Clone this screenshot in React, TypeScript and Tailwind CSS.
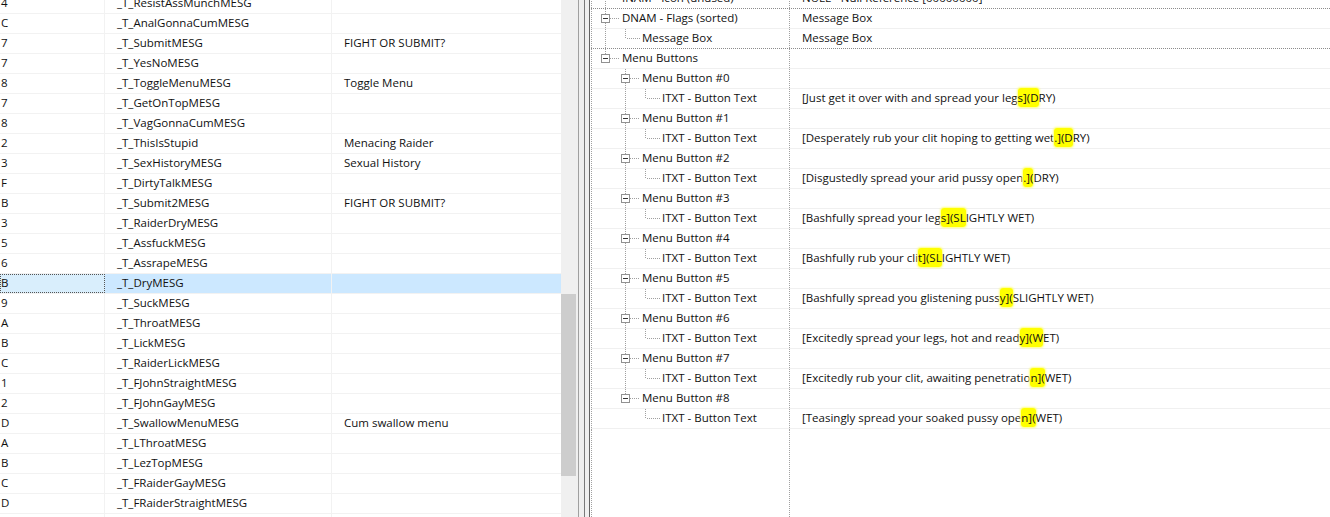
import { Fragment } from "react"

type ListRow = { id: string; edid: string; name?: string }

const listRows: ListRow[] = [
  { id: "4", edid: "_T_ResistAssMunchMESG" },
  { id: "C", edid: "_T_AnalGonnaCumMESG" },
  { id: "7", edid: "_T_SubmitMESG", name: "FIGHT OR SUBMIT?" },
  { id: "7", edid: "_T_YesNoMESG" },
  { id: "8", edid: "_T_ToggleMenuMESG", name: "Toggle Menu" },
  { id: "7", edid: "_T_GetOnTopMESG" },
  { id: "8", edid: "_T_VagGonnaCumMESG" },
  { id: "2", edid: "_T_ThisIsStupid", name: "Menacing Raider" },
  { id: "3", edid: "_T_SexHistoryMESG", name: "Sexual History" },
  { id: "F", edid: "_T_DirtyTalkMESG" },
  { id: "B", edid: "_T_Submit2MESG", name: "FIGHT OR SUBMIT?" },
  { id: "3", edid: "_T_RaiderDryMESG" },
  { id: "5", edid: "_T_AssfuckMESG" },
  { id: "6", edid: "_T_AssrapeMESG" },
  { id: "B", edid: "_T_DryMESG" },
  { id: "9", edid: "_T_SuckMESG" },
  { id: "A", edid: "_T_ThroatMESG" },
  { id: "B", edid: "_T_LickMESG" },
  { id: "C", edid: "_T_RaiderLickMESG" },
  { id: "1", edid: "_T_FJohnStraightMESG" },
  { id: "2", edid: "_T_FJohnGayMESG" },
  { id: "D", edid: "_T_SwallowMenuMESG", name: "Cum swallow menu" },
  { id: "A", edid: "_T_LThroatMESG" },
  { id: "B", edid: "_T_LezTopMESG" },
  { id: "C", edid: "_T_FRaiderGayMESG" },
  { id: "D", edid: "_T_FRaiderStraightMESG" },
  { id: "", edid: "" },
]

const SELECTED = 14

type TreeRow = {
  label: string
  value?: string | [string, string, string]
  level: number
  box?: boolean
  last?: boolean
  lines: number[]
  dotted?: boolean
}

const buttons: [string, string, string][] = [
  ["[Just get it over with and spread your leg", "s](D", "RY)"],
  ["[Desperately rub your clit hoping to getting wet", ".](D", "RY)"],
  ["[Disgustedly spread your arid pussy open", ".](", "DRY)"],
  ["[Bashfully spread your leg", "s](SL", "IGHTLY WET)"],
  ["[Bashfully rub your cli", "t](SL", "IGHTLY WET)"],
  ["[Bashfully spread you glistening puss", "y](", "SLIGHTLY WET)"],
  ["[Excitedly spread your legs, hot and read", "y](W", "ET)"],
  ["[Excitedly rub your clit, awaiting penetratio", "n](", "WET)"],
  ["[Teasingly spread your soaked pussy ope", "n](", "WET)"],
]

const treeRows: TreeRow[] = [
  { label: "INAM - Icon (unused)", value: "NULL - Null Reference [00000000]", level: 0, lines: [], dotted: true },
  { label: "DNAM - Flags (sorted)", value: "Message Box", level: 0, box: true, lines: [] },
  { label: "Message Box", value: "Message Box", level: 1, last: true, lines: [0], dotted: true },
  { label: "Menu Buttons", level: 0, box: true, last: true, lines: [] },
  ...buttons.flatMap((b, i): TreeRow[] => [
    { label: `Menu Button #${i}`, level: 1, box: true, last: i === buttons.length - 1, lines: [] },
    { label: "ITXT - Button Text", value: b, level: 2, last: true, lines: i === buttons.length - 1 ? [] : [1] },
  ]),
]

const LINE = "#a0a0a0"

function TreeLines({ row }: { row: TreeRow }) {
  const w = 30 + row.level * 20
  const cx = 13 + row.level * 20
  const mid = 9
  return (
    <svg width={w} height={19} className="shrink-0" shapeRendering="crispEdges">
      {row.lines.map((l) => (
        <line key={l} x1={13 + l * 20 + 0.5} y1={0} x2={13 + l * 20 + 0.5} y2={19} stroke={LINE} strokeDasharray="1 1" />
      ))}
      {row.box ? (
        <>
          <line x1={cx + 0.5} y1={0} x2={cx + 0.5} y2={mid - 4} stroke={LINE} strokeDasharray="1 1" />
          {!row.last && <line x1={cx + 0.5} y1={mid + 5} x2={cx + 0.5} y2={19} stroke={LINE} strokeDasharray="1 1" />}
          <line x1={cx + 5} y1={mid + 0.5} x2={cx + 15} y2={mid + 0.5} stroke={LINE} strokeDasharray="1 1" />
          <rect x={cx - 3.5} y={mid - 3.5} width={8} height={8} fill="#ffffff" stroke="#919191" />
          <line x1={cx - 2} y1={mid + 0.5} x2={cx + 3} y2={mid + 0.5} stroke="#333333" />
        </>
      ) : (
        <>
          <line x1={cx + 0.5} y1={0} x2={cx + 0.5} y2={row.last ? mid + 1 : 19} stroke={LINE} strokeDasharray="1 1" />
          <line x1={cx + 2} y1={mid + 0.5} x2={cx + 15} y2={mid + 0.5} stroke={LINE} strokeDasharray="1 1" />
        </>
      )}
    </svg>
  )
}

function Value({ value }: { value?: TreeRow["value"] }) {
  if (!value) return null
  if (typeof value === "string") return <span>{value}</span>
  return (
    <span>
      {value[0]}
      <span className="rounded-[3px] bg-[#ffff00] py-[2px] shadow-[0_0_2px_1px_#ffff80]">{value[1]}</span>
      {value[2]}
    </span>
  )
}

export default function App() {
  return (
    <div className="flex h-[517px] w-[1330px] overflow-hidden bg-white font-['Open_Sans','Noto_Sans',sans-serif] text-[11.5px] leading-[18px] text-[#111]">
      {/* left record list */}
      <div className="w-[561px] shrink-0 overflow-hidden">
        <div className="-mt-[6px]">
          {listRows.map((r, i) => (
            <div
              key={i}
              className={`flex h-[20px] border-b border-[#f2f2f2] ${i === SELECTED ? "bg-[#cce8ff]" : ""}`}
            >
              <div
                className={`w-[105px] shrink-0 whitespace-nowrap border-r pl-[1px] ${
                  i === SELECTED ? "border-dotted border-[#555] bg-[#d9eefc] outline-1 outline-dotted outline-[#555] -outline-offset-1" : "border-[#f2f2f2]"
                }`}
              >
                {r.id}
              </div>
              <div className="w-[227px] shrink-0 whitespace-nowrap border-r border-[#f2f2f2] pl-[12px]">{r.edid}</div>
              <div className="flex-1 whitespace-nowrap pl-[12px]">{r.name}</div>
            </div>
          ))}
        </div>
      </div>

      {/* scrollbar */}
      <div className="w-[17px] shrink-0 bg-[#f0f0f0]">
        <div className="mt-[294px] h-[182px] w-[15px] bg-[#cdcdcd]" />
      </div>

      {/* splitter */}
      <div className="flex w-[12px] shrink-0 bg-[#f0f0f0]">
        <div className="w-px bg-[#a0a0a0]" />
        <div className="w-[5px]" />
        <div className="w-px bg-[#7a7a7a]" />
        <div className="w-[4px]" />
        <div className="w-px bg-[#646464]" />
      </div>

      {/* record tree */}
      <div className="flex-1 overflow-hidden pl-px">
        <div className="-mt-[11px]">
          {treeRows.map((row, i) => (
            <Fragment key={i}>
              <div
                className={`flex h-[20px] border-b ${
                  row.dotted ? "border-dotted border-[#8c8c8c]" : "border-[#f0f0f0]"
                }`}
              >
                <div className="flex w-[199px] shrink-0 whitespace-nowrap border-x border-dotted border-x-[#a0a0a0]">
                  <TreeLines row={row} />
                  <span>{row.label}</span>
                </div>
                <div className="flex-1 whitespace-nowrap pl-[12px]">
                  <Value value={row.value} />
                </div>
              </div>
            </Fragment>
          ))}
        </div>
        <div className="flex h-[200px]">
          <div className="w-[199px] border-x border-dotted border-x-[#a0a0a0]" />
        </div>
      </div>
    </div>
  )
}
